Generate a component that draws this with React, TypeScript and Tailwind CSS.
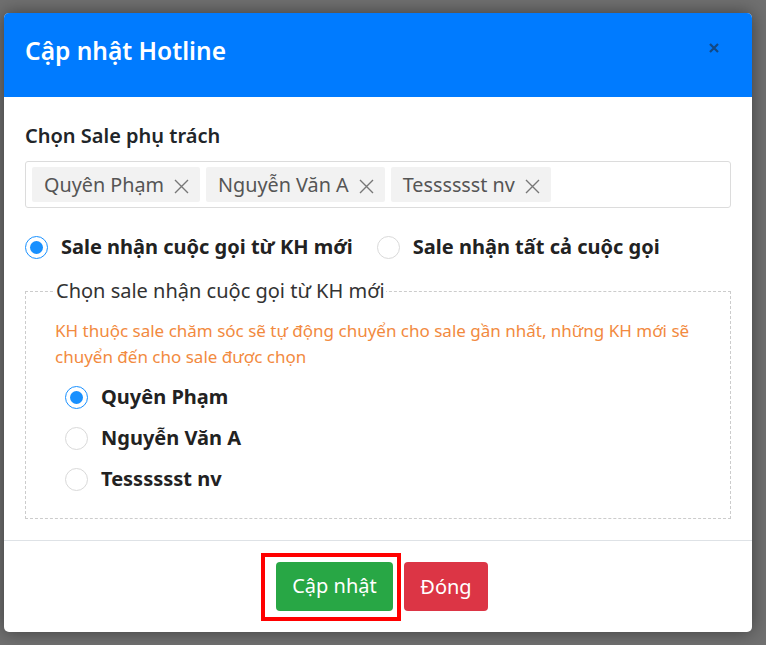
import { useState } from "react";

const sales = ["Quyên Phạm", "Nguyễn Văn A", "Tesssssst nv"];

function Radio({ checked }: { checked: boolean }) {
  return (
    <span
      className={
        "flex h-[23px] w-[23px] shrink-0 items-center justify-center rounded-full border bg-white " +
        (checked ? "border-[#1890ff]" : "border-[#d9d9d9]")
      }
    >
      {checked && <span className="h-[13px] w-[13px] rounded-full bg-[#1890ff]" />}
    </span>
  );
}

function Tag({ name }: { name: string }) {
  return (
    <span className="flex h-[35px] items-center gap-[10px] rounded-[2px] bg-[#f2f2f2] pl-[12px] pr-[11px] text-[19.8px] text-[#555]">
      {name}
      <svg width="15" height="15" viewBox="0 0 15 15" className="mt-[3px]">
        <path d="M1 1 L14 14 M14 1 L1 14" stroke="#777" strokeWidth="1.4" fill="none" />
      </svg>
    </span>
  );
}

export default function App() {
  const [mode, setMode] = useState<"new" | "all">("new");
  const [picked, setPicked] = useState(sales[0]);

  return (
    <div
      className="h-[645px] w-[766px] overflow-hidden bg-[#707070] pl-[4px] pt-[13px]"
      style={{ fontFamily: '"Noto Sans", "Open Sans", sans-serif' }}
    >
      <div className="w-[748px] overflow-hidden rounded-[5px] bg-white shadow-[0_0_18px_rgba(0,0,0,0.45)]">
        <header className="flex h-[84px] items-start justify-between bg-[#007bff] pl-[21px] pr-[33px] pt-[20px]">
          <h2 className="text-[24.5px] font-semibold leading-[36px] text-white">Cập nhật Hotline</h2>
          <svg width="10" height="10" viewBox="0 0 10 10" className="mt-[10px]">
            <path d="M1 1 L9 9 M9 1 L1 9" stroke="#16406f" strokeWidth="2.2" fill="none" opacity="0.85" />
          </svg>
        </header>

        <div className="px-[21px] pb-[21px] pt-[25px]">
          <div className="text-[20px] font-semibold leading-[28px] text-[#212529]">Chọn Sale phụ trách</div>
          <div className="mt-[11px] flex h-[47px] items-center gap-[6px] rounded-[3px] border border-[#dcdcdc] px-[6px]">
            {sales.map((s) => (
              <Tag key={s} name={s} />
            ))}
          </div>

          <div className="mt-[25px] flex items-center gap-[24px] text-[20px] font-bold leading-[28px] text-[#222]">
            <label className="flex items-center gap-[13px]" onClick={() => setMode("new")}>
              <Radio checked={mode === "new"} />
              Sale nhận cuộc gọi từ KH mới
            </label>
            <label className="flex items-center gap-[13px]" onClick={() => setMode("all")}>
              <Radio checked={mode === "all"} />
              Sale nhận tất cả cuộc gọi
            </label>
          </div>

          <fieldset className="mt-[16px] border border-dashed border-[#cccccc] pb-[25px] pl-[29px] pr-[20px]">
            <legend className="px-[1px] text-[20px] leading-[28px] text-[#333]">Chọn sale nhận cuộc gọi từ KH mới</legend>
            <p className="mt-[13px] text-[17px] leading-[26px] text-[#f28a40]">
              KH thuộc sale chăm sóc sẽ tự động chuyển cho sale gần nhất, những KH mới sẽ chuyển đến cho sale được chọn
            </p>
            <div className="mt-[13px] flex flex-col gap-[13px] pl-[10px] text-[20px] font-bold leading-[28px] text-[#222]">
              {sales.map((s) => (
                <label key={s} className="flex items-center gap-[13px]" onClick={() => setPicked(s)}>
                  <Radio checked={picked === s} />
                  {s}
                </label>
              ))}
            </div>
          </fieldset>
        </div>

        <footer className="flex h-[92px] items-center justify-center gap-[3px] border-t border-[#dee2e6] pr-[7px]">
          <div className="border-4 border-[#ff0000] pb-[6px] pl-[11px] pr-[4px] pt-[5px]">
            <button className="block h-[49px] w-[117px] rounded-[4px] bg-[#28a745] text-[20px] text-white">Cập nhật</button>
          </div>
          <button className="h-[49px] w-[84px] rounded-[4px] bg-[#dc3545] text-[20px] text-white">Đóng</button>
        </footer>
      </div>
    </div>
  );
}
